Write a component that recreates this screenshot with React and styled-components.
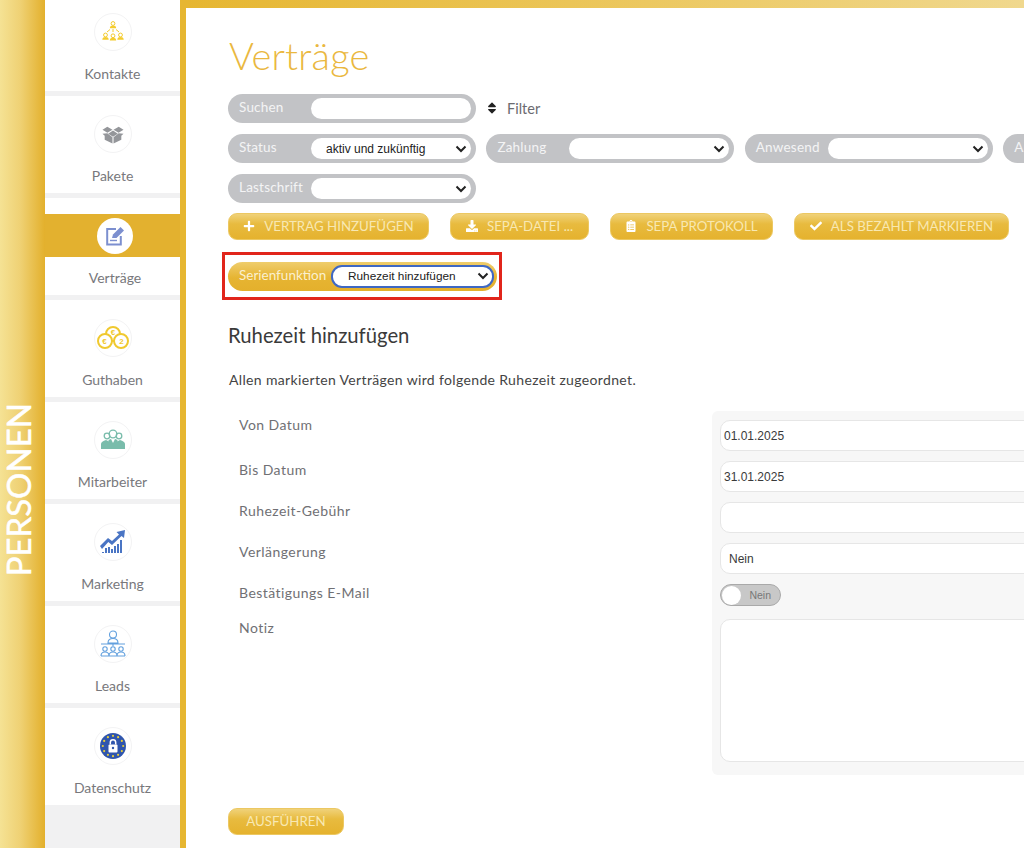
import React from "react";
import styled, { createGlobalStyle } from "styled-components";
import { FaPlus, FaDownload, FaClipboardList, FaCheck, FaSort } from "react-icons/fa";

const Global = createGlobalStyle`
  html, body { margin: 0; padding: 0; background: #fff; }
  * { box-sizing: border-box; }
  body { font-family: Lato, "Open Sans", sans-serif; }
`;

const Page = styled.div`
  display: flex;
  width: 1024px;
  height: 848px;
  overflow: hidden;
`;
const Band = styled.div`
  flex: 0 0 45px;
  display: flex;
  justify-content: center;
  align-items: center;
  padding-top: 132px;
  background: linear-gradient(90deg, #f5e294 0%, #efd174 45%, #e3b02c 100%);
`;
const BandTitle = styled.div`
  writing-mode: vertical-rl;
  transform: rotate(180deg);
  color: #fff;
  font-size: 33px;
  line-height: 30px;
  font-weight: 400;
  -webkit-text-stroke: 0.5px #fff;
  margin-left: -9px;
`;
const Side = styled.nav`
  flex: 0 0 135px;
  background: #f1f1f2;
  overflow: hidden;
`;
const SideList = styled.div`
  margin-top: -6px;
  display: flex;
  flex-direction: column;
`;
const Item = styled.div`
  height: 97px;
  margin-bottom: 5px;
  background: #fff;
  display: flex;
  flex-direction: column;
  align-items: center;
  padding-top: 19px;
`;
const ActiveBand = styled.div`
  align-self: stretch;
  height: 43px;
  background: #e3b12f;
  display: flex;
  align-items: center;
  justify-content: center;
`;
const ActiveWrap = styled(Item)`
  padding-top: 16px;
`;
const Disc = styled.div`
  width: 38px;
  height: 38px;
  border-radius: 50%;
  background: #fff;
  border: 1px solid #f3f3f4;
  display: flex;
  align-items: center;
  justify-content: center;
  flex: none;
`;
const ActiveDisc = styled(Disc)`
  width: 36px;
  height: 36px;
  border: none;
  margin-left: 5px;
`;
const ItemLabel = styled.div`
  margin-top: 13px;
  font-size: 14px;
  line-height: 20px;
  color: #78787c;
  margin-left: ${(p) => p.$shift || 0}px;
`;
const ActiveLabel = styled(ItemLabel)`
  margin-top: 11px;
`;
const Rail = styled.div`
  flex: 0 0 6px;
  background: #e6b631;
`;
const Main = styled.main`
  flex: 1 0 838px;
  width: 838px;
  overflow: hidden;
  display: flex;
  flex-direction: column;
`;
const TopBar = styled.div`
  flex: 0 0 8px;
  background: linear-gradient(90deg, #e6b631 0%, #ecc860 55%, #f0d88e 100%);
`;
const Content = styled.div`
  width: 1200px;
  padding: 27px 0 0 42px;
`;
const Title = styled.h1`
  margin: 0 0 19px 1px;
  font-size: 38px;
  line-height: 40px;
  font-weight: 300;
  color: #eab83f;
  letter-spacing: 0.2px;
`;
const SearchRow = styled.div`
  display: flex;
  align-items: center;
  gap: 9px;
  margin-bottom: 11px;
`;
const FilterGrid = styled.div`
  display: flex;
  flex-wrap: wrap;
  width: 1040px;
  gap: 11px 10.4px;
  align-items: center;
`;
const Pill = styled.div`
  width: 248px;
  height: 29px;
  border-radius: 15px;
  background: #c2c3c6;
  padding: 4px 5px 4px 11px;
  display: flex;
  align-items: center;
`;
const PillLabel = styled.span`
  flex: 0 0 72px;
  font-size: 13.5px;
  line-height: 18px;
  margin-top: -3px;
  color: #f4f4f5;
  white-space: nowrap;
  letter-spacing: 0.2px;
`;
const Field = styled.div`
  flex: 1;
  height: 21px;
  border-radius: 11px;
  background: #fff;
  display: flex;
  align-items: center;
  justify-content: space-between;
  padding: 0 4px 0 15px;
  font-family: "Liberation Sans", Arial, sans-serif;
  font-size: 12px;
  color: #222;
`;
const Chevron = () => (
  <svg width="12" height="8" viewBox="0 0 12 8" aria-hidden="true">
    <path d="M1.500 1.500 6 6l4.500-4.500" fill="none" stroke="#222" strokeWidth="2" />
  </svg>
);
const FilterToggle = styled.div`
  display: flex;
  align-items: center;
  gap: 8px;
  margin-top: -1px;
  font-size: 14.5px;
  color: #6b6b70;
`;
const ButtonRow = styled.div`
  display: flex;
  gap: 21px;
  margin-top: 10px;
`;
const GoldButton = styled.button`
  height: 27px;
  width: ${(p) => p.$w}px;
  border: 1px solid #ecc862;
  border-radius: 9px;
  background: linear-gradient(180deg, #f0d27a 0%, #e8bb3f 40%, #e5b22e 100%);
  color: #f8e8b2;
  font-family: inherit;
  font-size: 13.3px;
  font-weight: 400;
  display: flex;
  align-items: center;
  justify-content: center;
  gap: 9px;
  padding: 0 0 2px;
  white-space: nowrap;
  svg { color: #fff; font-size: 12px; flex: none; }
`;
const Marked = styled.div`
  width: 280px;
  height: 48px;
  margin: 12px 0 0 -6px;
  border: 3px solid #e1251b;
  display: flex;
  align-items: center;
  padding-left: 3px;
`;
const SeriesPill = styled.div`
  width: 269px;
  height: 29px;
  border-radius: 15px;
  background: linear-gradient(180deg, #efcd6c 0%, #e6b432 55%, #e4b02c 100%);
  display: flex;
  align-items: center;
  padding-left: 11px;
`;
const SeriesLabel = styled.span`
  flex: 0 0 92px;
  font-size: 13.5px;
  margin-top: -3px;
  color: #fbf0d0;
  white-space: nowrap;
`;
const SeriesField = styled(Field)`
  flex: 0 0 163px;
  height: 23px;
  border: 2px solid #3e68c4;
  padding: 0 3px 0 15px;
  font-size: 11.8px;
`;
const SectionTitle = styled.h2`
  margin: 23px 0 0 0;
  font-size: 20.3px;
  line-height: 24px;
  font-weight: 400;
  color: #3a3a3a;
`;
const Lead = styled.p`
  margin: 23px 0 0 1px;
  font-size: 14px;
  line-height: 20px;
  color: #444;
  letter-spacing: 0.35px;
`;
const FormGrid = styled.div`
  display: grid;
  grid-template-columns: 484px 1fr;
  margin-top: 21px;
`;
const Labels = styled.div`
  display: flex;
  flex-direction: column;
  padding: 4px 0 0 11px;
`;
const FieldLabel = styled.div`
  height: 20px;
  line-height: 20px;
  font-size: 14px;
  letter-spacing: 0.45px;
  color: #707074;
  margin-bottom: ${(p) => p.$after}px;
`;
const Panel = styled.div`
  width: 460px;
  height: 364px;
  background: #f7f7f7;
  border-radius: 6px;
  padding: 9px 0 0 8px;
  display: flex;
  flex-direction: column;
`;
const TextBox = styled.div`
  height: 31px;
  margin-bottom: 10px;
  border: 1px solid #e6e6e6;
  border-radius: 10px;
  background: #fff;
  font-family: "Liberation Sans", Arial, sans-serif;
  font-size: 12px;
  color: #3a3a3a;
  display: flex;
  align-items: center;
  padding-left: ${(p) => p.$pad || 3}px;
`;
const Toggle = styled.div`
  width: 61px;
  height: 22px;
  margin-bottom: 13px;
  border-radius: 11px;
  background: #c8c8c8;
  border: 1px solid #a9a9a9;
  display: flex;
  align-items: center;
  justify-content: space-between;
  padding-right: 9px;
  font-family: "Liberation Sans", Arial, sans-serif;
  font-size: 10.5px;
  color: #777;
`;
const Knob = styled.span`
  width: 19px;
  height: 19px;
  margin-left: 1px;
  border-radius: 50%;
  background: #fff;
`;
const TextArea = styled.div`
  height: 143px;
  border: 1px solid #e6e6e6;
  border-radius: 10px;
  background: #fff;
`;
const Run = styled(GoldButton)`
  margin-top: 33px;
`;

const people = (cx, cy, c) => (
  <g fill={c}>
    <circle cx={cx} cy={cy} r="1.900" fill="none" stroke={c} strokeWidth="1" />
    <path d={`M${cx - 3.2} ${cy + 4.8}c0-2.200 1.400-2.800 3.200-2.800s3.200.6 3.200 2.800z`} />
  </g>
);
const KontakteIcon = () => (
  <svg width="24" height="24" viewBox="0 0 24 24">
    {people(12, 3.5, "#f4cc2e")}
    {people(4.5, 15, "#f4cc2e")}
    {people(12, 15.8, "#f4cc2e")}
    {people(19.5, 15, "#f4cc2e")}
    <path d="M12 9v3M9 9.500 6 12M15 9.500l3 2.500" stroke="#f4cc2e" fill="none" />
  </svg>
);
const PaketeIcon = () => (
  <svg width="24" height="21" viewBox="0 0 26 24">
    <path d="M12.400 6.500 6.500 3 1 6.500 6.600 10zM13.600 6.500 19.500 3 25 6.500 19.400 10zM13 7.500 7.500 11 13 14.500 18.500 11z" fill="#94969a" />
    <path d="M1 11l5.500-.5L12.400 15v7.200L3.500 18v-4.500zM25 11l-5.500-.5L13.600 15v7.200l8.900-4.200v-4.500z" fill="#94969a" />
  </svg>
);
const VertragIcon = () => (
  <svg width="22" height="22" viewBox="0 0 22 22">
    <path d="M12 4H3.200v15.500h13.600V11" fill="none" stroke="#7c8fcf" strokeWidth="2" />
    <path d="M8 13l1-3.500L16.500 2 20 5.500 12.500 13z" fill="#7c8fcf" />
    <path d="M6 15.500h7" stroke="#7c8fcf" strokeWidth="1.400" />
  </svg>
);
const GuthabenIcon = () => (
  <svg width="32" height="26" viewBox="0 0 32 26">
    <g fill="#fff" stroke="#f0c92f" strokeWidth="2">
      <circle cx="16" cy="9" r="7" />
      <circle cx="8" cy="16" r="7" />
      <circle cx="24" cy="16" r="7" />
    </g>
    <g fontFamily="Liberation Sans, sans-serif" fontSize="8" fontWeight="700" fill="#f0c92f" textAnchor="middle">
      <text x="16" y="10">€</text>
      <text x="7.500" y="19">€</text>
      <text x="24.500" y="19">2</text>
    </g>
  </svg>
);
const MitarbeiterIcon = () => (
  <svg width="24" height="22" viewBox="0 0 24 22">
    <g fill="none" stroke="#79bcab" strokeWidth="1.300">
      <circle cx="6" cy="7" r="2.800" />
      <circle cx="18" cy="7" r="2.800" />
      <circle cx="12" cy="5" r="3.800" />
    </g>
    <path d="M0 20v-5c0-2 2-3 5-4l2 1 1 8zM24 20v-5c0-2-2-3-5-4l-2 1-1 8z" fill="#79bcab" />
    <path d="M7 20v-7c0-2 2-3 3-3l2 4 2-4c1 0 3 1 3 3v7z" fill="#79bcab" />
  </svg>
);
const MarketingIcon = () => (
  <svg width="26" height="24" viewBox="0 0 26 24">
    <path d="M0 16 8 8l4 3 7-6.500L16.500 2 25 0l-1 8-2.500-2L12 15 8.300 12 2 19z" fill="#4a75c4" />
    <path d="M3 23v-1M6 23v-5M9 23v-6M12 23v-4M15 23v-7M18 23v-9M21 23V10" stroke="#4a75c4" strokeWidth="2" />
  </svg>
);
const LeadsIcon = () => (
  <svg width="26" height="28" viewBox="0 0 26 28" fill="none" stroke="#62a0de" strokeWidth="1.100">
    <circle cx="13" cy="4.500" r="3.500" />
    <path d="M8 13c0-3 2-4.500 5-4.500s5 1.500 5 4.500zM1 14h24M13 13v3" />
    <circle cx="5" cy="19" r="2.200" />
    <circle cx="13" cy="19" r="2.200" />
    <circle cx="21" cy="19" r="2.200" />
    <path d="M1 26c0-3 1.500-4 4-4s4 1 4 4M9 26c0-3 1.500-4 4-4s4 1 4 4M17 26c0-3 1.500-4 4-4s4 1 4 4M1 26h24" />
  </svg>
);
const DatenschutzIcon = () => {
  const stars = Array.from({ length: 12 }, (_, i) => {
    const a = (i * Math.PI) / 6;
    return <circle key={i} cx={13 + 10.2 * Math.cos(a)} cy={13 + 10.2 * Math.sin(a)} r="1.100" fill="#e8cf3a" />;
  });
  return (
    <svg width="26" height="26" viewBox="0 0 26 26">
      <circle cx="13" cy="13" r="13" fill="#2f55ad" />
      {stars}
      <rect x="8.500" y="11.500" width="9" height="8" rx="1" fill="#fff" />
      <path d="M10.300 11.500V9.500a2.700 2.700 0 0 1 5.400 0v2" fill="none" stroke="#fff" strokeWidth="1.500" />
      <circle cx="13" cy="15" r="1.200" fill="#2f55ad" />
    </svg>
  );
};

const nav = [
  { label: "Kontakte", icon: <KontakteIcon /> },
  { label: "Pakete", icon: <PaketeIcon /> },
  { label: "Verträge", icon: <VertragIcon />, active: true, shift: 5 },
  { label: "Guthaben", icon: <GuthabenIcon /> },
  { label: "Mitarbeiter", icon: <MitarbeiterIcon /> },
  { label: "Marketing", icon: <MarketingIcon /> },
  { label: "Leads", icon: <LeadsIcon /> },
  { label: "Datenschutz", icon: <DatenschutzIcon /> },
];

const filters = [
  { label: "Status", value: "aktiv und zukünftig" },
  { label: "Zahlung", value: "" },
  { label: "Anwesend", value: "" },
  { label: "Art", value: "" },
];

const formLabels = [
  ["Von Datum", 25],
  ["Bis Datum", 21],
  ["Ruhezeit-Gebühr", 21],
  ["Verlängerung", 21],
  ["Bestätigungs E-Mail", 15],
  ["Notiz", 0],
];

export default function App() {
  return (
    <Page>
      <Global />
      <Band>
        <BandTitle>PERSONEN</BandTitle>
      </Band>
      <Side>
        <SideList>
          {nav.map((n) =>
            n.active ? (
              <ActiveWrap key={n.label}>
                <ActiveBand>
                  <ActiveDisc>{n.icon}</ActiveDisc>
                </ActiveBand>
                <ActiveLabel $shift={n.shift}>{n.label}</ActiveLabel>
              </ActiveWrap>
            ) : (
              <Item key={n.label}>
                <Disc>{n.icon}</Disc>
                <ItemLabel>{n.label}</ItemLabel>
              </Item>
            )
          )}
        </SideList>
      </Side>
      <Rail />
      <Main>
        <TopBar />
        <Content>
          <Title>Verträge</Title>
          <SearchRow>
            <Pill>
              <PillLabel>Suchen</PillLabel>
              <Field />
            </Pill>
            <FilterToggle>
              <FaSort size={14} color="#222" />
              Filter
            </FilterToggle>
          </SearchRow>
          <FilterGrid>
            {filters.map((f) => (
              <Pill key={f.label}>
                <PillLabel>{f.label}</PillLabel>
                <Field>
                  <span>{f.value}</span>
                  <Chevron />
                </Field>
              </Pill>
            ))}
            <Pill>
              <PillLabel>Lastschrift</PillLabel>
              <Field>
                <span />
                <Chevron />
              </Field>
            </Pill>
          </FilterGrid>
          <ButtonRow>
            <GoldButton $w={201}><FaPlus />VERTRAG HINZUFÜGEN</GoldButton>
            <GoldButton $w={139}><FaDownload />SEPA-DATEI ...</GoldButton>
            <GoldButton $w={163}><FaClipboardList />SEPA PROTOKOLL</GoldButton>
            <GoldButton $w={215}><FaCheck />ALS BEZAHLT MARKIEREN</GoldButton>
          </ButtonRow>
          <Marked>
            <SeriesPill>
              <SeriesLabel>Serienfunktion</SeriesLabel>
              <SeriesField>
                <span>Ruhezeit hinzufügen</span>
                <Chevron />
              </SeriesField>
            </SeriesPill>
          </Marked>
          <SectionTitle>Ruhezeit hinzufügen</SectionTitle>
          <Lead>Allen markierten Verträgen wird folgende Ruhezeit zugeordnet.</Lead>
          <FormGrid>
            <Labels>
              {formLabels.map(([t, after]) => (
                <FieldLabel key={t} $after={after}>{t}</FieldLabel>
              ))}
            </Labels>
            <Panel>
              <TextBox>01.01.2025</TextBox>
              <TextBox>31.01.2025</TextBox>
              <TextBox />
              <TextBox $pad={8}>Nein</TextBox>
              <Toggle><Knob />Nein</Toggle>
              <TextArea />
            </Panel>
          </FormGrid>
          <Run $w={116}>AUSFÜHREN</Run>
        </Content>
      </Main>
    </Page>
  );
}
